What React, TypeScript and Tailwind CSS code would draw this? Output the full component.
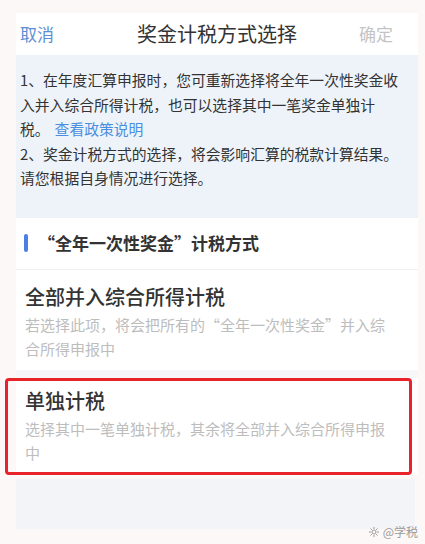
const FONT = "font-['Noto_Sans_CJK_SC','Noto_Sans',sans-serif]";

const OptionRow = ({ title, desc }: { title: string; desc: string }) => (
  <div className="bg-white pl-[9px] pr-[20px]">
    <div className="text-[20px] leading-[28px] text-[#333] font-medium">{title}</div>
    <p className="mt-[2px] text-[15px] leading-[24.5px] text-[#bdbdbd]">{desc}</p>
  </div>
);

export default function App() {
  return (
    <div className={`${FONT} w-[425px] h-[544px] overflow-hidden bg-[#fcf8f8] pt-[13px] pl-[16px] pr-[7px]`}>
      <div className="relative">
        {/* nav bar */}
        <div className="grid h-[42px] grid-cols-[1fr_auto_1fr] items-center bg-white">
          <span className="pl-[4px] text-[17px] text-[#5b8fd4]">取消</span>
          <span className="text-[20px] text-[#333]">奖金计税方式选择</span>
          <span className="justify-self-end pr-[25px] text-[17px] text-[#c4c4c4]">确定</span>
        </div>

        {/* notice */}
        <div className="bg-[#eef3fa] pl-[4px] pr-[18px] pt-[13px] pb-[27px] text-[14.8px] leading-[24.5px] text-[#333]">
          <p>
            1、在年度汇算申报时，您可重新选择将全年一次性奖金收入并入综合所得计税，也可以选择其中一笔奖金单独计税。
            <span className="ml-[5px] inline-block text-[#4a8ee0]">查看政策说明</span>
          </p>
          <p>2、奖金计税方式的选择，将会影响汇算的税款计算结果。请您根据自身情况进行选择。</p>
        </div>

        {/* section header */}
        <div className="flex h-[52px] items-center gap-[10px] border-b border-[#efefef] bg-white pl-[8px]">
          <span className="h-[18px] w-[4px] rounded-full bg-[#4b7fe3]" />
          <span className="text-[17px] font-bold text-[#333]">“全年一次性奖金”计税方式</span>
        </div>

        <div className="pt-[13px] pb-[8px] bg-white">
          <OptionRow
            title="全部并入综合所得计税"
            desc="若选择此项，将会把所有的“全年一次性奖金”并入综合所得申报中"
          />
        </div>

        <div className="h-[8px] bg-[#f7f7f9]" />

        <div className="relative bg-white pt-[9px] pb-[9px]">
          <OptionRow
            title="单独计税"
            desc="选择其中一笔单独计税，其余将全部并入综合所得申报中"
          />
          <div className="absolute -left-[11px] right-[6px] top-0 bottom-0 rounded-[4px] border-[3px] border-[#e8232a]" />
        </div>

        <div className="mt-[4px] mr-[3px] h-[50px] bg-[#f3f4f8]" />

        <div className="absolute right-[0px] bottom-[-12px] flex items-center gap-[3px] text-[12px] text-[#9a9a9a]">
          <svg width="12" height="12" viewBox="0 0 12 12" fill="none" stroke="#9a9a9a" strokeWidth="1">
            <circle cx="6" cy="6" r="2" />
            <path d="M6 1v2M6 9v2M1 6h2M9 6h2M2.5 2.5l1.4 1.4M8.1 8.1l1.4 1.4M2.5 9.5l1.4-1.4M8.1 3.9l1.4-1.4" />
          </svg>
          <span>@学税</span>
        </div>
      </div>
    </div>
  );
}
